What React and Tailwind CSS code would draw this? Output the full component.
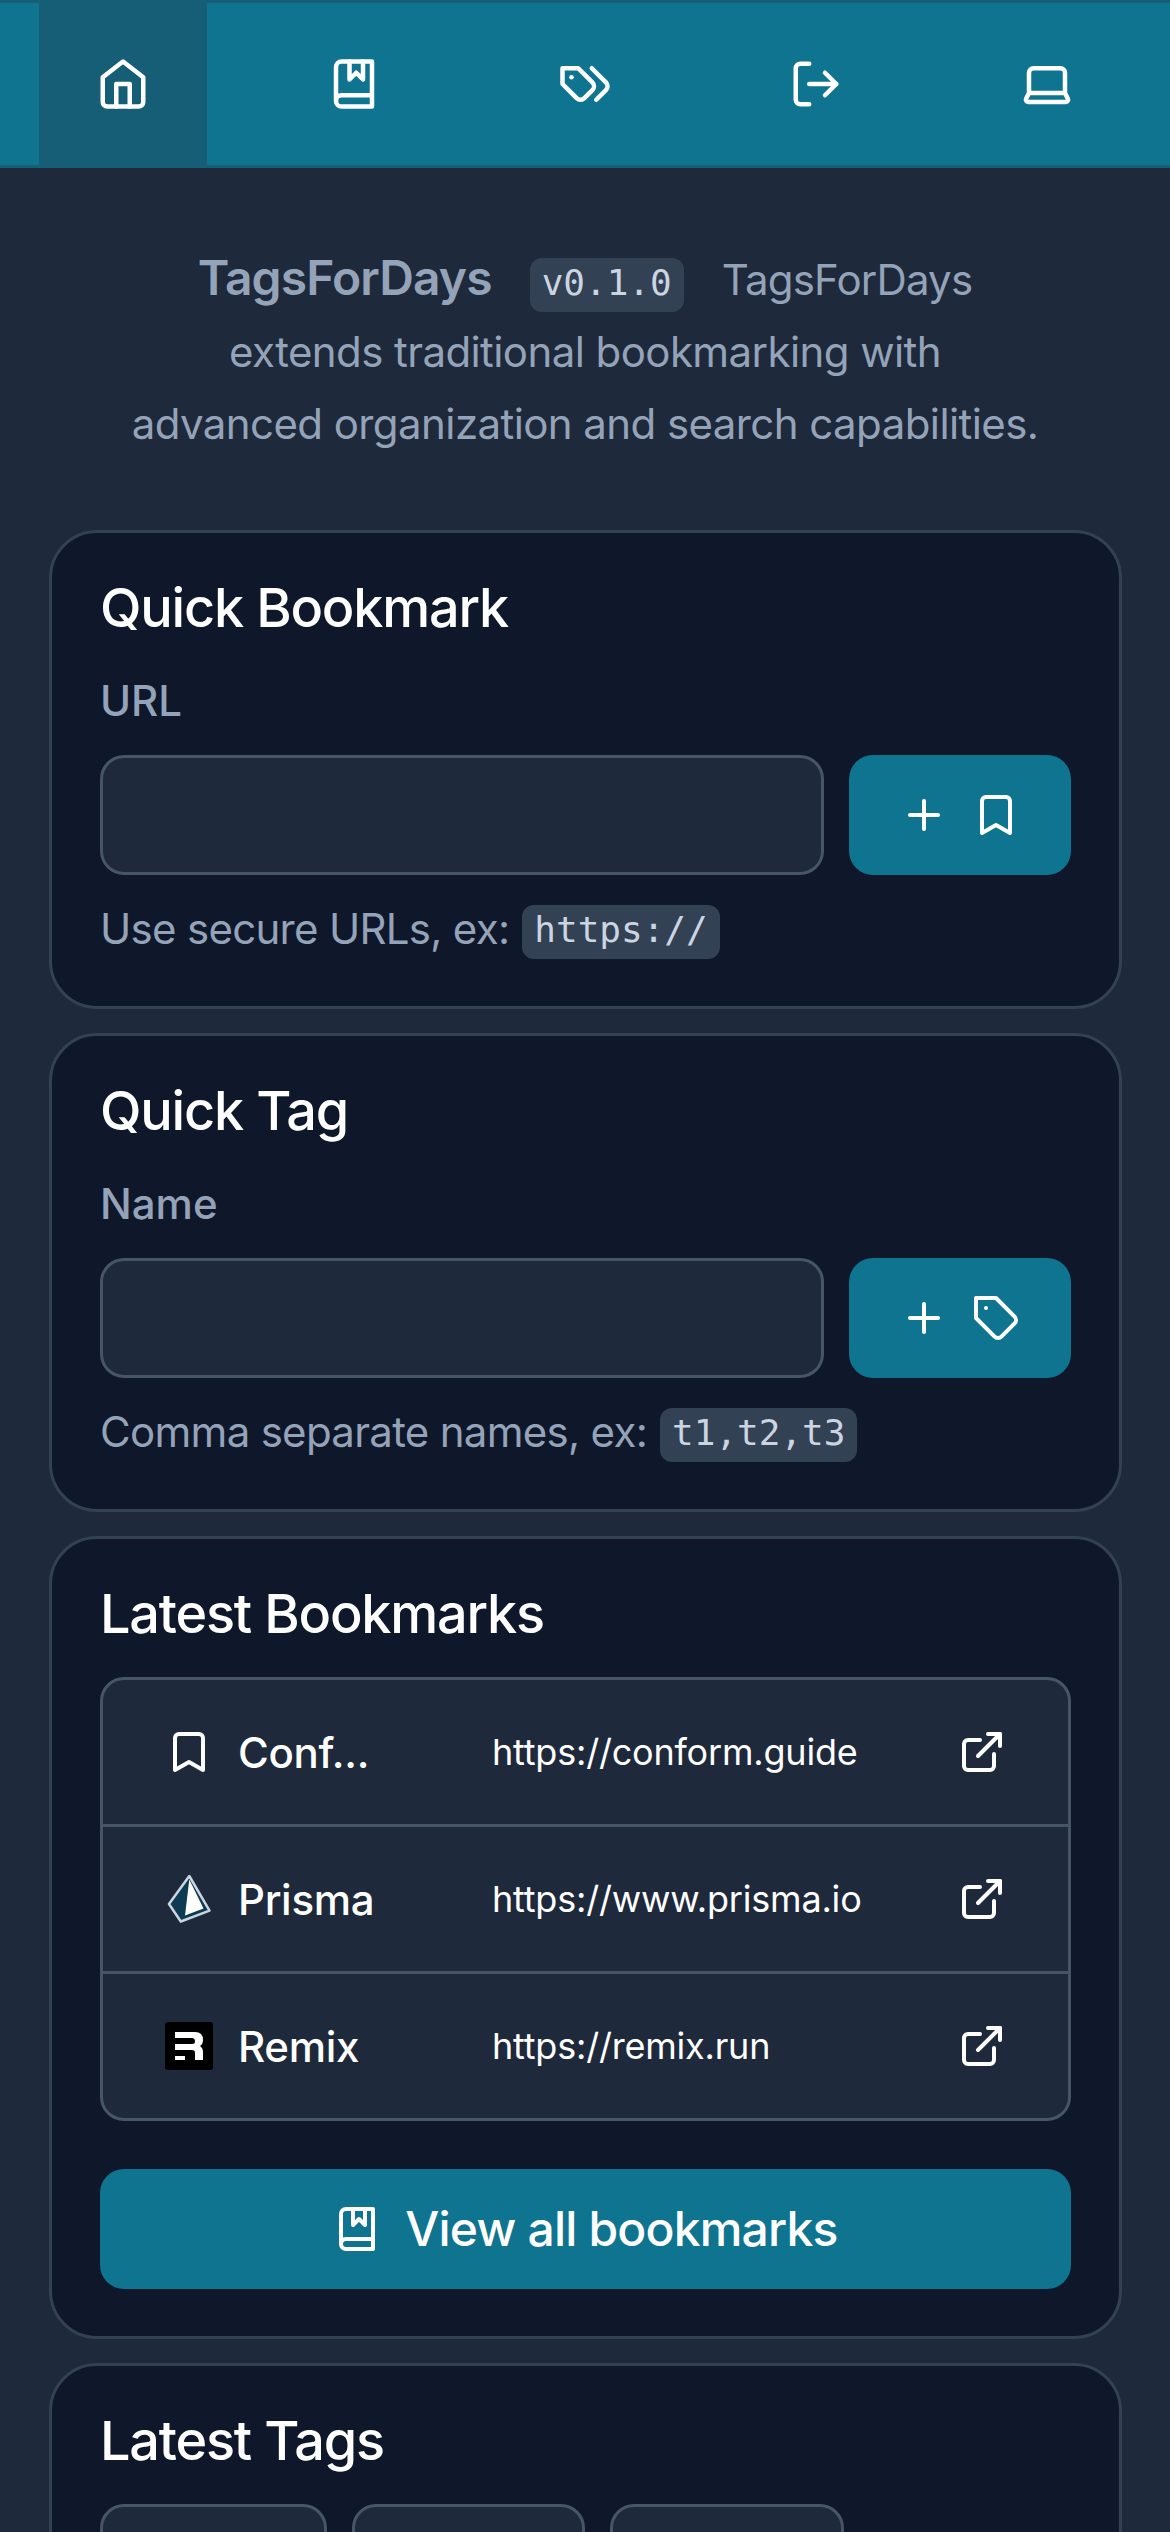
const Icon = ({ size = 48, className = "", children }) => (
  <svg
    width={size}
    height={size}
    viewBox="0 0 24 24"
    fill="none"
    stroke="currentColor"
    strokeWidth="2"
    strokeLinecap="round"
    strokeLinejoin="round"
    className={`shrink-0 ${className}`}
  >
    {children}
  </svg>
);

const HomeIcon = (props) => (
  <Icon {...props}>
    <path d="m3 9 9-7 9 7v11a2 2 0 0 1-2 2H5a2 2 0 0 1-2-2z" />
    <polyline points="9 22 9 12 15 12 15 22" />
  </Icon>
);

const BookMarkedIcon = (props) => (
  <Icon {...props}>
    <path d="M4 19.5v-15A2.5 2.5 0 0 1 6.5 2H20v20H6.5a2.5 2.5 0 0 1 0-5H20" />
    <polyline points="10 2 10 10 13 7 16 10 16 2" />
  </Icon>
);

const TagsIcon = (props) => (
  <Icon {...props}>
    <path d="M9 5H2v7l6.29 6.29c.94.94 2.48.94 3.42 0l3.58-3.58c.94-.94.94-2.48 0-3.42L9 5Z" />
    <path d="M6 9.01V9" />
    <path d="m15 5 6.3 6.3a2.4 2.4 0 0 1 0 3.4L17 19" />
  </Icon>
);

const LogOutIcon = (props) => (
  <Icon {...props}>
    <path d="M9 21H5a2 2 0 0 1-2-2V5a2 2 0 0 1 2-2h4" />
    <polyline points="16 17 21 12 16 7" />
    <line x1="21" x2="9" y1="12" y2="12" />
  </Icon>
);

const LaptopIcon = (props) => (
  <Icon {...props}>
    <path d="M20 16V7a2 2 0 0 0-2-2H6a2 2 0 0 0-2 2v9m16 0H4m16 0 1.28 2.55a1 1 0 0 1-.9 1.45H3.62a1 1 0 0 1-.9-1.45L4 16" />
  </Icon>
);

const PlusIcon = (props) => (
  <Icon {...props}>
    <path d="M5 12h14" />
    <path d="M12 5v14" />
  </Icon>
);

const BookmarkIcon = (props) => (
  <Icon {...props}>
    <path d="m19 21-7-4-7 4V5a2 2 0 0 1 2-2h10a2 2 0 0 1 2 2v16z" />
  </Icon>
);

const TagIcon = (props) => (
  <Icon {...props}>
    <path d="M12 2H2v10l9.29 9.29c.94.94 2.48.94 3.42 0l6.58-6.58c.94-.94.94-2.48 0-3.42L12 2Z" />
    <path d="M7 7h.01" />
  </Icon>
);

const ExternalLinkIcon = (props) => (
  <Icon {...props}>
    <path d="M18 13v6a2 2 0 0 1-2 2H5a2 2 0 0 1-2-2V8a2 2 0 0 1 2-2h6" />
    <polyline points="15 3 21 3 21 9" />
    <line x1="10" x2="21" y1="14" y2="3" />
  </Icon>
);

const PrismaLogo = () => (
  <svg width="48" height="48" viewBox="0 0 48 48" className="shrink-0">
    <path
      d="M24.3 1 L4 29 L15.8 46.5 L44.5 35.7 Z"
      fill="#0c3b52"
      stroke="#cbd5e1"
      strokeWidth="2.5"
      strokeLinejoin="round"
    />
    <path d="M24.3 4.5 L38.5 33.5 L20 40.5 Z" fill="#ffffff" />
  </svg>
);

const RemixLogo = () => (
  <svg width="48" height="48" viewBox="0 0 48 48" className="shrink-0">
    <rect width="48" height="48" rx="3" fill="#000000" />
    <path
      d="M10 10 H30 Q38 10 38 18 Q38 22 35 24 Q38 26 38 30 V38 H30 V31 Q30 28 27 28 H10 V22 H27 Q30 22 30 19.5 Q30 16 27 16 H10 Z"
      fill="#ffffff"
    />
    <path d="M10 34 H20 V38 H10 Z" fill="#ffffff" />
  </svg>
);

const Code = ({ children }) => (
  <code className="inline-block h-[54px] rounded-[12px] bg-[#334155] px-[12px] font-['DejaVu_Sans_Mono',monospace] text-[36px] leading-[50px] tracking-normal text-[#cbd5e1]">
    {children}
  </code>
);

const Card = ({ title, children }) => (
  <section className="rounded-[48px] border-[3px] border-[#334155] bg-[#0f172a] px-[48px] pt-[45px] pb-[47px]">
    <h2 className="text-[54px] leading-[60px] font-medium tracking-[-1.2px] text-white">{title}</h2>
    {children}
  </section>
);

const QuickForm = ({ title, label, icon, hint, example }) => (
  <Card title={title}>
    <label className="mt-[33px] mb-[24px] block text-[42px] leading-[60px] font-medium text-[#94a3b8]">{label}</label>
    <div className="flex gap-[25px]">
      <input className="h-[120px] min-w-0 flex-1 rounded-[24px] border-[3px] border-[#475569] bg-[#1e293b]" />
      <button className="flex h-[120px] w-[222px] items-center justify-center gap-[24px] rounded-[24px] bg-[#0e7490] text-white">
        <PlusIcon />
        {icon}
      </button>
    </div>
    <p className="mt-[30px] flex h-[54px] items-center gap-[13px] text-[42px] tracking-[-0.7px] text-[#94a3b8]">
      <span className="pb-[7px]">{hint}</span>
      <Code>{example}</Code>
    </p>
  </Card>
);

const bookmarks = [
  { name: "Conf...", url: "https://conform.guide", icon: <BookmarkIcon className="text-white" /> },
  { name: "Prisma", url: "https://www.prisma.io", icon: <PrismaLogo /> },
  { name: "Remix", url: "https://remix.run", icon: <RemixLogo /> },
];

const tabs = [HomeIcon, BookMarkedIcon, TagsIcon, LogOutIcon, LaptopIcon];

export default function App() {
  return (
    <div className="h-[2532px] overflow-hidden bg-[#1e293b] font-['Inter',sans-serif]">
      <header className="flex h-[168px] justify-between border-y-[3px] border-[#155e75] bg-[#0e7490] px-[39px] text-white">
        {tabs.map((TabIcon, i) => (
          <div
            key={i}
            className={`flex w-[168px] items-center justify-center ${i === 0 ? "bg-[#155e75]" : ""}`}
          >
            <TabIcon size={54} />
          </div>
        ))}
      </header>

      <p className="mx-auto mt-[74px] w-[1000px] text-center text-[42px] leading-[72px] tracking-[-0.58px] text-[#94a3b8]">
        <span className="text-[48px] font-semibold tracking-[-0.9px]">TagsForDays</span>
        <span className="mx-[38px]">
          <Code>v0.1.0</Code>
        </span>
        <span className="tracking-[-0.8px]">TagsForDays</span>
        <br />
        extends traditional bookmarking with
        <br />
        advanced organization and search capabilities.
      </p>

      <main className="mt-[70px] flex flex-col gap-[24px] pr-[48px] pl-[49px]">
        <QuickForm
          title="Quick Bookmark"
          label="URL"
          icon={<BookmarkIcon />}
          hint="Use secure URLs, ex:"
          example="https://"
        />
        <QuickForm
          title="Quick Tag"
          label="Name"
          icon={<TagIcon />}
          hint="Comma separate names, ex:"
          example="t1,t2,t3"
        />

        <Card title="Latest Bookmarks">
          <div className="mt-[33px] divide-y-[3px] divide-[#475569] rounded-[24px] border-[3px] border-[#475569] bg-[#1e293b] text-white">
            {bookmarks.map((b) => (
              <div key={b.url} className="box-content flex h-[144px] items-center px-[62px]">
                {b.icon}
                <span className="ml-[25px] w-[254px] text-[42px] font-medium tracking-[-0.3px]">{b.name}</span>
                <span className="flex-1 text-[36px] tracking-[-0.2px]">{b.url}</span>
                <ExternalLinkIcon />
              </div>
            ))}
          </div>
          <button className="mt-[48px] flex h-[120px] w-full items-center justify-center gap-[24px] rounded-[24px] bg-[#0e7490] text-[48px] font-medium tracking-[-0.8px] text-white">
            <BookMarkedIcon />
            View all bookmarks
          </button>
        </Card>

        <Card title="Latest Tags">
          <div className="mt-[33px] flex gap-[25px]">
            <div className="h-[120px] w-[227px] rounded-[24px] border-[3px] border-[#475569] bg-[#1e293b]" />
            <div className="h-[120px] w-[233px] rounded-[24px] border-[3px] border-[#475569] bg-[#1e293b]" />
            <div className="h-[120px] w-[234px] rounded-[24px] border-[3px] border-[#475569] bg-[#1e293b]" />
          </div>
        </Card>
      </main>
    </div>
  );
}
